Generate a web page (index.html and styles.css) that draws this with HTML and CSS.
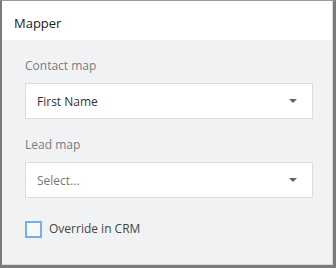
FILE: index.html
```html
<!DOCTYPE html>
<html>
<head>
<meta charset="utf-8">
<link rel="stylesheet" href="styles.css">
</head>
<body>
<div class="frame">
  <div class="panel">
    <div class="header">Mapper</div>
    <div class="content">
      <div class="field">
        <div class="label">Contact map</div>
        <div class="select">
          <span class="value">First Name</span>
          <span class="caret"></span>
        </div>
      </div>
      <div class="field second">
        <div class="label">Lead map</div>
        <div class="select">
          <span class="value placeholder">Select...</span>
          <span class="caret"></span>
        </div>
      </div>
      <label class="check">
        <span class="box"></span>
        <span class="check-text">Override in CRM</span>
      </label>
    </div>
  </div>
</div>
</body>
</html>
```
FILE: styles.css
```css
html, body {
  margin: 0;
  padding: 0;
}
body {
  font-family: "Open Sans", "Noto Sans", sans-serif;
  font-size: 12px;
}
.frame {
  width: 336px;
  height: 268px;
  box-sizing: border-box;
  border-left: 2px solid #7b7b7b;
  border-top: 1px solid #9a9a9a;
  border-right: 3px solid #7b7b7b;
  border-bottom: 3px solid #7b7b7b;
}
.panel {
  height: 100%;
  box-sizing: border-box;
  border-right: 1px solid #d8d8d8;
  border-bottom: 1px solid #d8d8d8;
  background: #f1f2f4;
  display: flex;
  flex-direction: column;
}
.header {
  height: 39px;
  box-sizing: border-box;
  background: #fff;
  padding: 12px 12px 0 12px;
  font-size: 13px;
  line-height: 20px;
  color: #222;
}
.content {
  padding: 16px 19px 0 23px;
  display: flex;
  flex-direction: column;
}
.field {
  display: flex;
  flex-direction: column;
}
.field.second {
  margin-top: 16px;
}
.label {
  line-height: 20px;
  color: #7a7d82;
  margin-bottom: 7px;
}
.select {
  height: 36px;
  box-sizing: border-box;
  border: 1px solid #dcdcdc;
  background: #fff;
  display: flex;
  align-items: center;
  justify-content: space-between;
  padding: 0 15px 0 11px;
}
.value {
  color: #333;
}
.value.placeholder {
  color: #777;
}
.caret {
  width: 0;
  height: 0;
  border-left: 4px solid transparent;
  border-right: 4px solid transparent;
  border-top: 4px solid #5b6470;
}
.check {
  margin-top: 22px;
  display: flex;
  align-items: center;
  gap: 7px;
}
.box {
  width: 17px;
  height: 17px;
  box-sizing: border-box;
  border: 2px solid #74b1ea;
  background: #f6f8fa;
}
.check-text {
  color: #444;
  line-height: 18px;
}
```
